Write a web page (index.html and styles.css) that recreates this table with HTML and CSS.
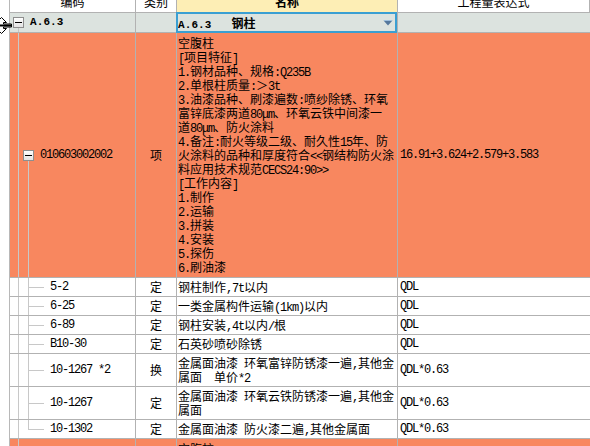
FILE: index.html
```html
<!DOCTYPE html>
<html lang="zh-CN">
<head>
<meta charset="utf-8">
<title>清单</title>
<link rel="stylesheet" href="styles.css">
</head>
<body>
<div class="sheet">
  <div class="row hdr">
    <div class="s"></div>
    <div class="c"><span>编码</span></div>
    <div class="c"><span>类别</span></div>
    <div class="c name-h"><span>名称</span></div>
    <div class="c"><span>工程量表达式</span></div>
  </div>

  <div class="row grp">
    <div class="s">
      <svg class="cursor" width="21" height="17" viewBox="0 0 21 17"><path d="M10.5 0.5 L15.5 5.5 L12.5 5.5 L12.5 7 L20.5 7 L20.5 10 L12.5 10 L12.5 11.5 L15.5 11.5 L10.5 16.5 L5.5 11.5 L8.5 11.5 L8.5 10 L0.5 10 L0.5 7 L8.5 7 L8.5 5.5 L5.5 5.5 Z" fill="#fff" stroke="#000" stroke-width="1"/><rect x="0.5" y="7.5" width="20" height="2" fill="#000"/></svg>
    </div>
    <div class="c code"><span class="box"></span><b class="m">A.6.3</b></div>
    <div class="c type"></div>
    <div class="c name sel"><b class="t"><span class="m">A.6.3&nbsp;&nbsp;&nbsp;</span>钢柱</b><svg class="dd" width="10" height="6" viewBox="0 0 10 6"><path d="M0.5 0.5 L9.5 0.5 L5 5.5 Z" fill="#55789c"/><path d="M1 0.5 L9 0.5" stroke="#9fc0de" stroke-width="1"/></svg></div>
    <div class="c x"></div>
  </div>

  <div class="row item">
    <div class="s"></div>
    <div class="c code"><span class="box"></span><span class="m">010603002002</span></div>
    <div class="c type"><span>项</span></div>
    <div class="c name"><div class="t">空腹柱<br><span class="m">[</span>项目特征<span class="m">]</span><br><span class="m">1.</span>钢材品种、规格<span class="m">:Q235B</span><br><span class="m">2.</span>单根柱质量<span class="m">:</span>＞<span class="m">3t</span><br><span class="m">3.</span>油漆品种、刷漆遍数<span class="m">:</span>喷纱除锈、环氧<br>富锌底漆两道<span class="m">80μm</span>、环氧云铁中间漆一<br>道<span class="m">80μm</span>、防火涂料<br><span class="m">4.</span>备注<span class="m">:</span>耐火等级二级、耐久性<span class="m">15</span>年、防<br>火涂料的品种和厚度符合<span class="m">&lt;&lt;</span>钢结构防火涂<br>料应用技术规范<span class="m">CECS24:90&gt;&gt;</span><br><span class="m">[</span>工作内容<span class="m">]</span><br><span class="m">1.</span>制作<br><span class="m">2.</span>运输<br><span class="m">3.</span>拼装<br><span class="m">4.</span>安装<br><span class="m">5.</span>探伤<br><span class="m">6.</span>刷油漆</div></div>
    <div class="c x"><span class="m">16.91+3.624+2.579+3.583</span></div>
  </div>

  <div class="row sub">
    <div class="s"></div>
    <div class="c code"><span class="m">5-2</span></div>
    <div class="c type"><span>定</span></div>
    <div class="c name"><span class="t">钢柱制作<span class="m">,7t</span>以内</span></div>
    <div class="c x"><span class="m">QDL</span></div>
  </div>
  <div class="row sub">
    <div class="s"></div>
    <div class="c code"><span class="m">6-25</span></div>
    <div class="c type"><span>定</span></div>
    <div class="c name"><span class="t">一类金属构件运输<span class="m">(1km)</span>以内</span></div>
    <div class="c x"><span class="m">QDL</span></div>
  </div>
  <div class="row sub">
    <div class="s"></div>
    <div class="c code"><span class="m">6-89</span></div>
    <div class="c type"><span>定</span></div>
    <div class="c name"><span class="t">钢柱安装<span class="m">,4t</span>以内<span class="m">/</span>根</span></div>
    <div class="c x"><span class="m">QDL</span></div>
  </div>
  <div class="row sub">
    <div class="s"></div>
    <div class="c code"><span class="m">B10-30</span></div>
    <div class="c type"><span>定</span></div>
    <div class="c name"><span class="t">石英砂喷砂除锈</span></div>
    <div class="c x"><span class="m">QDL</span></div>
  </div>
  <div class="row sub two">
    <div class="s"></div>
    <div class="c code"><span class="m">10-1267 *2</span></div>
    <div class="c type"><span>换</span></div>
    <div class="c name"><span class="t">金属面油漆<span class="m">&nbsp;</span>环氧富锌防锈漆一遍<span class="m">,</span>其他金<br>属面<span class="m">&nbsp;&nbsp;</span>单价<span class="m">*2</span></span></div>
    <div class="c x"><span class="m">QDL*0.63</span></div>
  </div>
  <div class="row sub two">
    <div class="s"></div>
    <div class="c code"><span class="m">10-1267</span></div>
    <div class="c type"><span>定</span></div>
    <div class="c name"><span class="t">金属面油漆<span class="m">&nbsp;</span>环氧云铁防锈漆一遍<span class="m">,</span>其他金<br>属面</span></div>
    <div class="c x"><span class="m">QDL*0.63</span></div>
  </div>
  <div class="row sub last">
    <div class="s"></div>
    <div class="c code"><span class="m">10-1302</span></div>
    <div class="c type"><span>定</span></div>
    <div class="c name"><span class="t">金属面油漆<span class="m">&nbsp;</span>防火漆二遍<span class="m">,</span>其他金属面</span></div>
    <div class="c x"><span class="m">QDL*0.63</span></div>
  </div>

  <div class="row item tail">
    <div class="s"></div>
    <div class="c code"></div>
    <div class="c type"></div>
    <div class="c name"><div class="t">空腹柱<br><span class="m">[</span>项目特征<span class="m">]</span></div></div>
    <div class="c x"></div>
  </div>
</div>
</body>
</html>
```

FILE: styles.css
```css
html, body {
  margin: 0;
  padding: 0;
}
body {
  width: 590px;
  height: 446px;
  overflow: hidden;
  background: #fff;
  color: #000;
  font-family: "Noto Sans CJK SC", sans-serif;
  font-size: 12px;
  line-height: 14px;
}
.sheet {
  margin-top: -8px;
}
.row {
  display: grid;
  grid-template-columns: 10px 126px 41px 221px 192px;
}
.s {
  position: relative;
  background: #fff;
  border-right: 1px solid #b8b8b8;
}
.c {
  display: flex;
  align-items: center;
  min-width: 0;
  overflow: hidden;
  white-space: nowrap;
  border-right: 1px solid #b2b2b2;
  border-bottom: 1px solid #b2b2b2;
}
.c.x {
  border-right: none;
  padding-left: 2px;
}
.t {
  line-height: 14px;
}
.m {
  font-family: "Liberation Mono", monospace;
  font-size: 12px;
  line-height: 9px;
  letter-spacing: -1.2px;
}
b.m, b .m {
  font-size: 11px;
  letter-spacing: 0.1px;
}

/* header */
.hdr {
  height: 21px;
  background: #fff;
}
.hdr .c {
  justify-content: center;
  line-height: 20px;
}
.hdr .c.x {
  padding-left: 0;
}
.hdr .name-h {
  background: #fdeeb5;
  font-weight: bold;
}

/* group row */
.grp {
  height: 20px;
  background: #dce3df;
}
.grp .code {
  padding-left: 3px;
  gap: 6px;
  background: linear-gradient(#c4c4c4, #c4c4c4) 8px 100% / 1px 50% no-repeat;
}
.cursor {
  position: absolute;
  left: -9px;
  top: 4px;
  z-index: 2;
}
.sel {
  position: relative;
  overflow: visible;
  justify-content: space-between;
  padding-left: 1px;
}
.sel::after {
  content: "";
  position: absolute;
  left: -1px;
  top: -1px;
  right: 0;
  bottom: -1px;
  border: 2px solid #3a9fd2;
  pointer-events: none;
}
.dd {
  margin-right: 4px;
  flex: none;
}

/* tree box */
.box {
  flex: none;
  width: 11px;
  height: 11px;
  box-sizing: border-box;
  border: 1px solid #8e8e8e;
  background:
    linear-gradient(#000, #000) center / 7px 1px no-repeat,
    linear-gradient(#ffffff, #e2e2e2);
}

/* item (清单) row */
.item {
  background: #f8875f;
}
.item .code {
  padding-left: 13px;
  gap: 6px;
  background:
    linear-gradient(#c8c8c8, #c8c8c8) 8px 0 / 1px 100% no-repeat,
    linear-gradient(#c8c8c8, #c8c8c8) 18px 100% / 1px 50% no-repeat;
}
.item .name {
  display: block;
  padding: 3px 0 3px 1px;
}
.type {
  justify-content: center;
}
.name {
  padding-left: 1px;
}

/* sub rows */
.sub {
  height: 19px;
  background: #fff;
}
.sub.two {
  height: 33px;
}
.sub .code {
  padding-left: 40px;
  background:
    linear-gradient(#c8c8c8, #c8c8c8) 8px 0 / 1px 100% no-repeat,
    linear-gradient(#c8c8c8, #c8c8c8) 18px 0 / 1px 100% no-repeat,
    linear-gradient(#c8c8c8, #c8c8c8) 18px 50% / 16px 1px no-repeat;
}
.sub.last .code {
  background:
    linear-gradient(#c8c8c8, #c8c8c8) 8px 0 / 1px 100% no-repeat,
    linear-gradient(#c8c8c8, #c8c8c8) 18px 0 / 1px 50% no-repeat,
    linear-gradient(#c8c8c8, #c8c8c8) 18px 50% / 16px 1px no-repeat;
}
.tail .code {
  background: linear-gradient(#c8c8c8, #c8c8c8) 8px 0 / 1px 100% no-repeat;
}
```
